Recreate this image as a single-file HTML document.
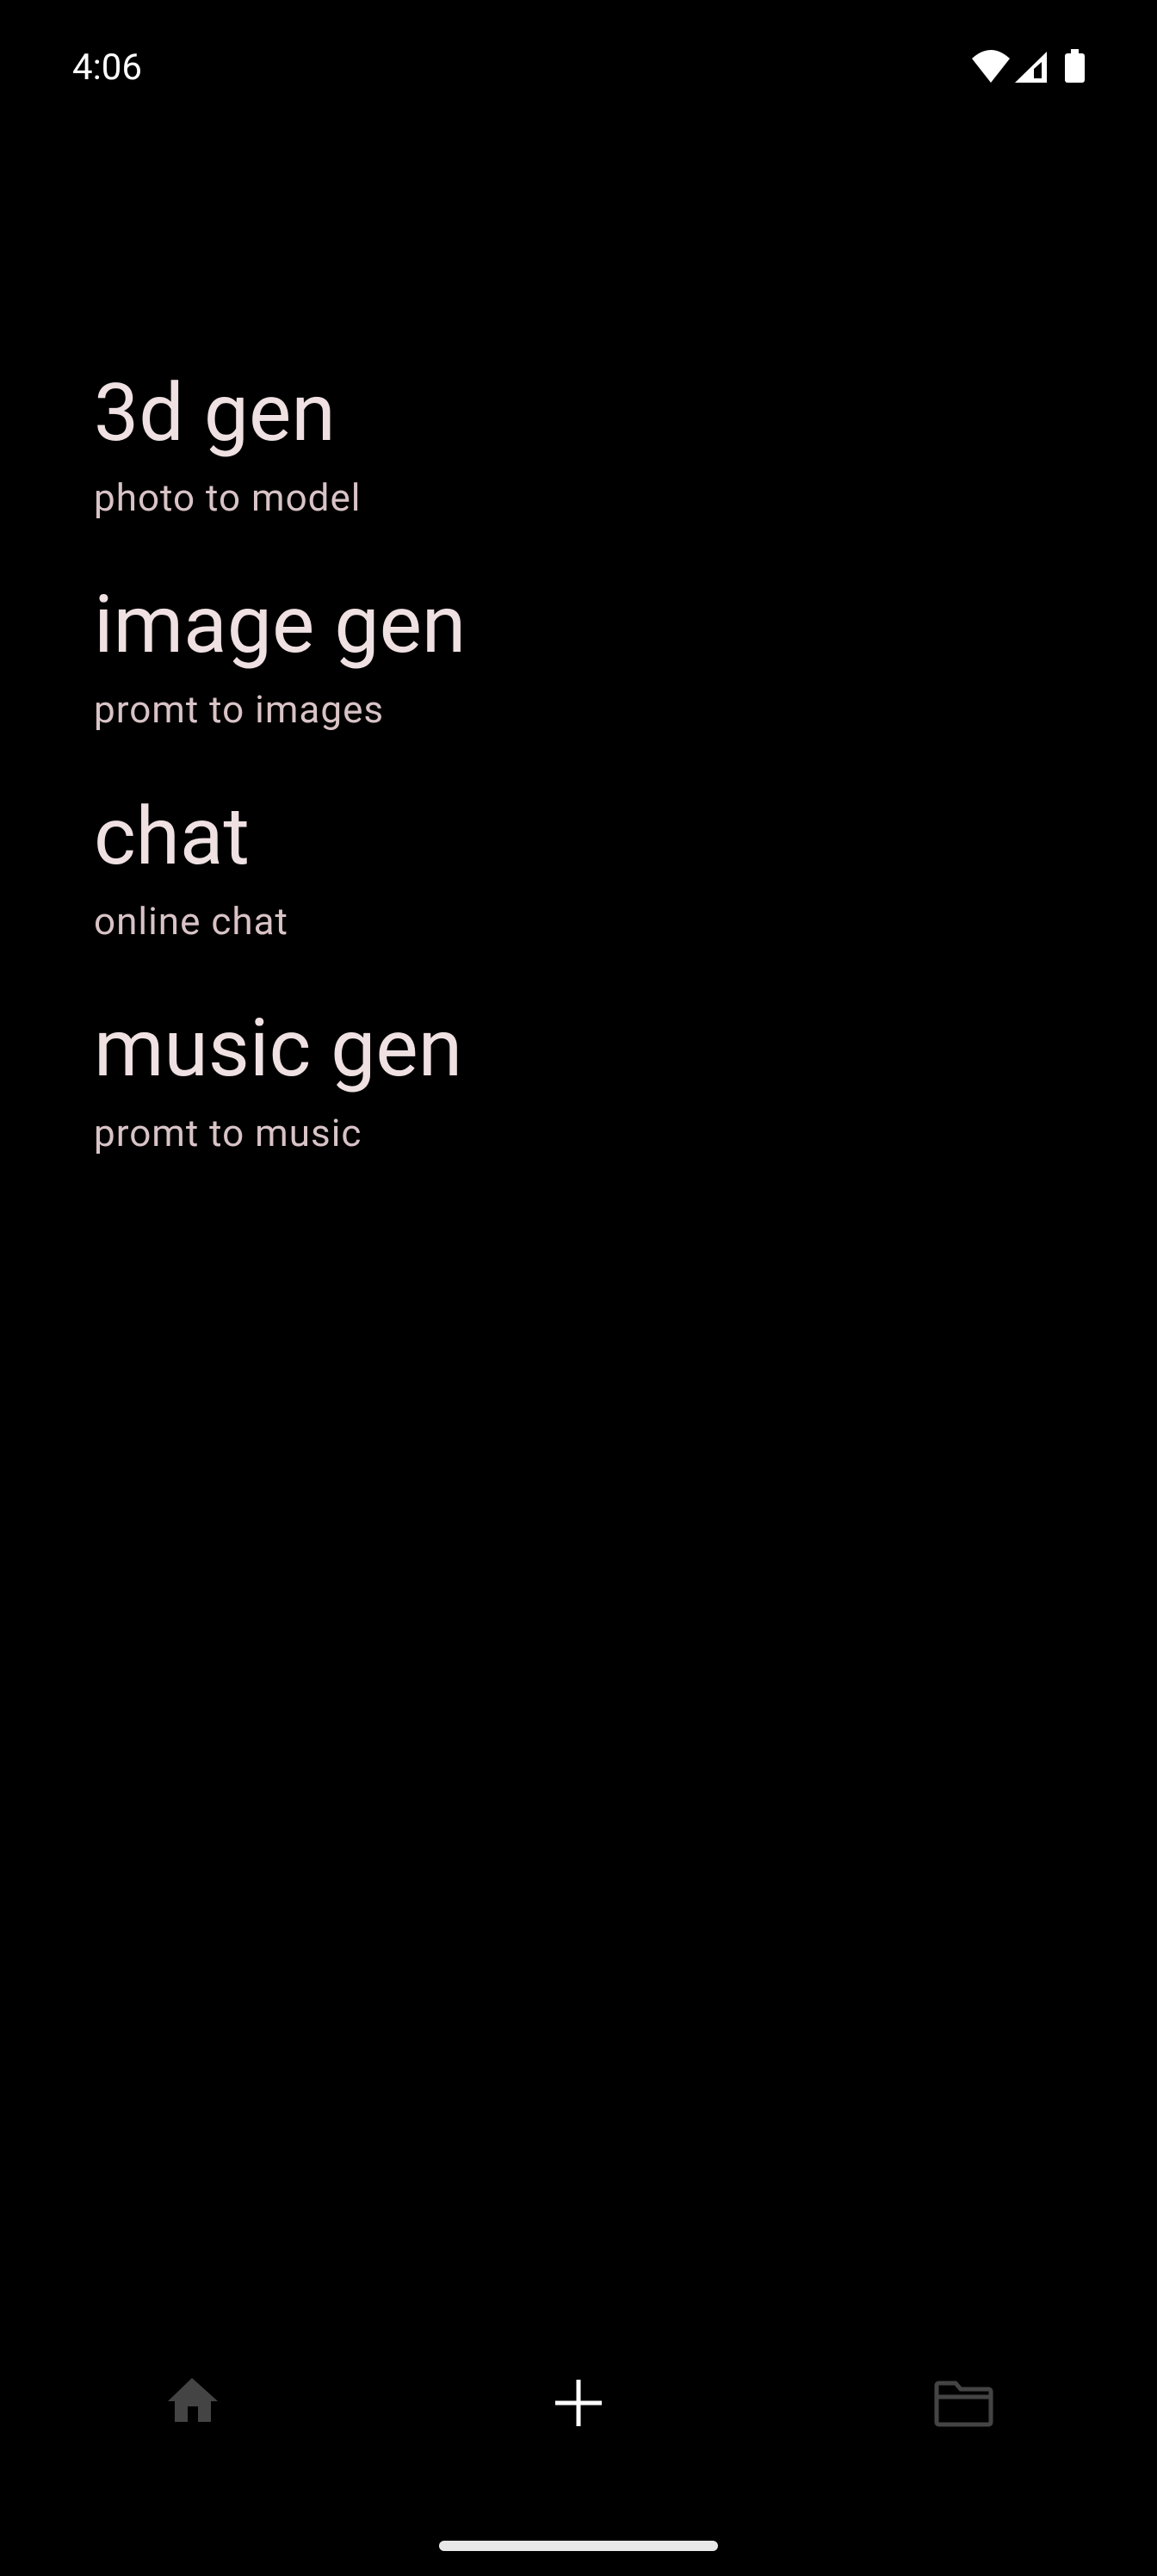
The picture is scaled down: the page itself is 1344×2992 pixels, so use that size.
<!DOCTYPE html>
<html><head><meta charset="utf-8"><style>
html,body{margin:0;padding:0;background:#000;}
body{width:1344px;height:2992px;position:relative;overflow:hidden;font-family:"Roboto","Liberation Sans",sans-serif;}
.t{position:absolute;left:109px;color:#efe0e2;font-size:93px;line-height:1;white-space:nowrap;}
.s{position:absolute;left:109px;color:#d8c3c6;font-size:44px;line-height:1;white-space:nowrap;letter-spacing:1px;}
</style></head><body>
<div style="position:absolute;left:84px;top:58px;color:#fff;font-size:42px;line-height:1;">4:06</div>
<svg style="position:absolute;left:0;top:0" width="1344" height="120">
<path d="M1129 68 Q1151 48 1173 68 L1151 96 Z" fill="#fff"/>
<path d="M1179 96 L1216 60 L1216 96 Z" fill="#fff"/>
<path d="M1201 80 L1210 72 L1210 91 L1201 91 Z" fill="#000"/>
<rect x="1237" y="62" width="23" height="34" rx="3" fill="#fff"/>
<rect x="1244" y="57" width="9" height="6" fill="#fff"/>
</svg>
<div class="t" style="top:433px">3d gen</div>
<div class="s" style="top:556px">photo to model</div>
<div class="t" style="top:679px">image gen</div>
<div class="s" style="top:802px">promt to images</div>
<div class="t" style="top:925px">chat</div>
<div class="s" style="top:1048px">online chat</div>
<div class="t" style="top:1171px">music gen</div>
<div class="s" style="top:1294px">promt to music</div>
<svg style="position:absolute;left:0;top:2698px" width="1344" height="294">
<path d="M223 64 L253 91 L245 91 L245 115 L230 115 L230 97 L218 97 L218 115 L203 115 L203 91 L195 91 Z" fill="#444"/>
<rect x="669.5" y="66" width="5" height="54" fill="#fff"/>
<rect x="645" y="90.5" width="54" height="5" fill="#fff"/>
<path d="M1091 70 L1110 70 L1116 77 L1148 77 Q1151 77 1151 80 L1151 115 Q1151 118 1148 118 L1091 118 Q1088 118 1088 115 L1088 73 Q1088 70 1091 70 Z M1088 86 L1151 86" fill="none" stroke="#444" stroke-width="5"/>
<rect x="510" y="253" width="324" height="12" rx="6" fill="#e8e8e8"/>
</svg>
</body></html>
